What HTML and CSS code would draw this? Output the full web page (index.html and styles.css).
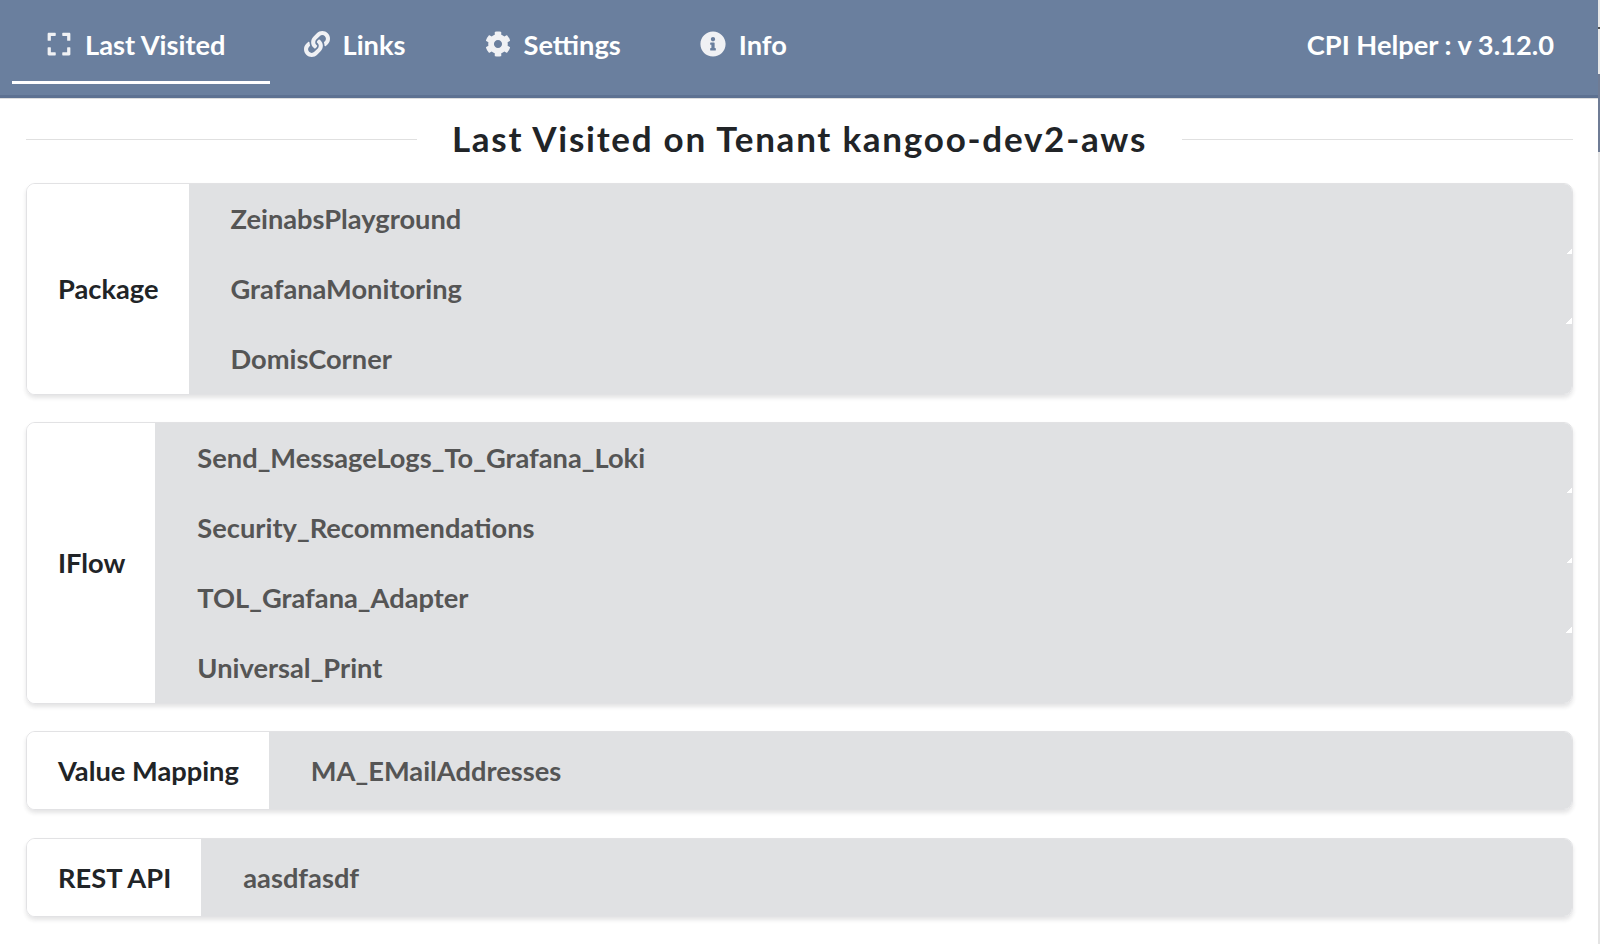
FILE: index.html
```html
<!DOCTYPE html>
<html lang="en">
<head>
    <meta charset="UTF-8">
    <title>CPI Helper</title>
    <link rel="stylesheet" href="styles.css">
</head>
<body>
    <div class="page">
        <nav class="menu">
            <a class="menu-item active" href="#">
                <svg class="icon" viewBox="0 0 448 512"><path fill="currentColor" d="M0 180V56c0-13.300 10.700-24 24-24h124c6.600 0 12 5.400 12 12v40c0 6.600-5.400 12-12 12H64v84c0 6.600-5.400 12-12 12H12c-6.600 0-12-5.400-12-12zM288 44v40c0 6.600 5.400 12 12 12h84v84c0 6.600 5.400 12 12 12h40c6.600 0 12-5.400 12-12V56c0-13.300-10.700-24-24-24H300c-6.600 0-12 5.400-12 12zm148 276h-40c-6.600 0-12 5.400-12 12v84h-84c-6.600 0-12 5.400-12 12v40c0 6.600 5.400 12 12 12h124c13.300 0 24-10.700 24-24V332c0-6.600-5.400-12-12-12zM160 468v-40c0-6.600-5.400-12-12-12H64v-84c0-6.600-5.400-12-12-12H12c-6.600 0-12 5.400-12 12v124c0 13.300 10.700 24 24 24h124c6.600 0 12-5.400 12-12z"/></svg>
                Last Visited
            </a>
            <a class="menu-item" href="#">
                <svg class="icon" viewBox="0 0 512 512"><path fill="currentColor" d="M326.612 185.391c59.747 59.809 58.927 155.698.36 214.59-.11.12-.24.25-.36.37l-67.2 67.2c-59.27 59.27-155.699 59.262-214.96 0-59.27-59.26-59.27-155.7 0-214.96l37.106-37.106c9.84-9.84 26.786-3.3 27.294 10.606.648 17.722 3.826 35.527 9.69 52.721 1.986 5.822.567 12.262-3.783 16.612l-13.087 13.087c-28.026 28.026-28.905 73.66-1.155 101.96 28.024 28.579 74.086 28.749 102.325.51l67.2-67.19c28.191-28.191 28.073-73.757 0-101.83-3.701-3.694-7.429-6.564-10.341-8.569a16.037 16.037 0 0 1-6.947-12.606c-.396-10.567 3.348-21.456 11.698-29.806l21.054-21.055c5.521-5.521 14.182-6.199 20.584-1.731a152.482 152.482 0 0 1 20.522 17.197zM467.547 44.449c-59.261-59.262-155.69-59.27-214.96 0l-67.2 67.2c-.12.12-.25.25-.36.37-58.566 58.892-59.387 154.781.36 214.59a152.454 152.454 0 0 0 20.521 17.196c6.402 4.468 15.064 3.789 20.584-1.731l21.054-21.055c8.35-8.35 12.094-19.239 11.698-29.806a16.037 16.037 0 0 0-6.947-12.606c-2.912-2.005-6.64-4.875-10.341-8.569-28.073-28.073-28.191-73.639 0-101.83l67.2-67.19c28.239-28.239 74.3-28.069 102.325.51 27.75 28.3 26.872 73.934-1.155 101.96l-13.087 13.087c-4.35 4.35-5.769 10.79-3.783 16.612 5.864 17.194 9.042 34.999 9.69 52.721.509 13.906 17.454 20.446 27.294 10.606l37.106-37.106c59.271-59.259 59.271-155.699.001-214.959z"/></svg>
                Links
            </a>
            <a class="menu-item" href="#">
                <svg class="icon" viewBox="0 0 512 512"><path fill="currentColor" d="M487.4 315.700l-42.600-24.600c4.300-23.200 4.300-47 0-70.200l42.600-24.600c4.900-2.800 7.100-8.600 5.500-14-11.100-35.600-30-67.800-54.700-94.600-3.800-4.100-10-5.100-14.800-2.300L380.800 110c-17.900-15.400-38.500-27.300-60.800-35.100V25.800c0-5.600-3.900-10.500-9.400-11.700-36.700-8.200-74.300-7.800-109.200 0-5.500 1.200-9.400 6.100-9.400 11.700V75c-22.200 7.900-42.800 19.800-60.800 35.100L88.700 85.500c-4.900-2.800-11-1.900-14.800 2.300-24.700 26.700-43.600 58.900-54.700 94.600-1.700 5.400.6 11.200 5.500 14L67.300 221c-4.300 23.200-4.300 47 0 70.200l-42.600 24.600c-4.900 2.800-7.100 8.600-5.500 14 11.100 35.600 30 67.800 54.700 94.600 3.800 4.100 10 5.100 14.800 2.300l42.600-24.600c17.900 15.400 38.500 27.300 60.800 35.100v49.200c0 5.600 3.900 10.500 9.400 11.700 36.700 8.200 74.300 7.800 109.200 0 5.500-1.200 9.400-6.100 9.400-11.700v-49.200c22.200-7.900 42.800-19.800 60.800-35.100l42.600 24.600c4.900 2.800 11 1.900 14.800-2.300 24.700-26.700 43.600-58.900 54.700-94.600 1.500-5.500-.7-11.300-5.600-14.100zM256 336c-44.100 0-80-35.900-80-80s35.900-80 80-80 80 35.900 80 80-35.900 80-80 80z"/></svg>
                Settings
            </a>
            <a class="menu-item" href="#">
                <svg class="icon" viewBox="0 0 512 512"><path fill="currentColor" d="M256 8C119.043 8 8 119.083 8 256c0 136.997 111.043 248 248 248s248-111.003 248-248C504 119.083 392.957 8 256 8zm0 110c23.196 0 42 18.804 42 42s-18.804 42-42 42-42-18.804-42-42 18.804-42 42-42zm56 254c0 6.627-5.373 12-12 12h-88c-6.627 0-12-5.373-12-12v-24c0-6.627 5.373-12 12-12h12v-64h-12c-6.627 0-12-5.373-12-12v-24c0-6.627 5.373-12 12-12h64c6.627 0 12 5.373 12 12v100h12c6.627 0 12 5.373 12 12v24z"/></svg>
                Info
            </a>
            <span class="version">CPI Helper : v 3.12.0</span>
        </nav>

        <main class="content">
            <h2 class="title">Last Visited on Tenant kangoo-dev2-aws</h2>

            <section class="group">
                <div class="group-label">Package</div>
                <div class="group-list">
                    <a class="group-item" href="#">ZeinabsPlayground</a>
                    <a class="group-item" href="#">GrafanaMonitoring</a>
                    <a class="group-item" href="#">DomisCorner</a>
                </div>
            </section>

            <section class="group">
                <div class="group-label">IFlow</div>
                <div class="group-list">
                    <a class="group-item" href="#">Send_MessageLogs_To_Grafana_Loki</a>
                    <a class="group-item" href="#">Security_Recommendations</a>
                    <a class="group-item" href="#">TOL_Grafana_Adapter</a>
                    <a class="group-item" href="#">Universal_Print</a>
                </div>
            </section>

            <section class="group single">
                <div class="group-label">Value Mapping</div>
                <div class="group-list">
                    <a class="group-item" href="#">MA_EMailAddresses</a>
                </div>
            </section>

            <section class="group single">
                <div class="group-label">REST API</div>
                <div class="group-list">
                    <a class="group-item" href="#">aasdfasdf</a>
                </div>
            </section>
        </main>
    </div>
    <div class="edge"></div>
</body>
</html>
```

FILE: styles.css
```css
* {
    box-sizing: border-box;
}

body {
    display: flex;
    min-height: 944px;
    margin: 0;
    background-color: #fff;
    color: #212427;
    font-family: Lato, "Open Sans", sans-serif;
    font-weight: 700;
    font-size: 27.25px;
}

a {
    color: inherit;
    text-decoration: none;
}

.page {
    flex: 1;
    min-width: 0;
}

/* strip of the next window at the right edge of the shot */
.edge {
    width: 2px;
    background: linear-gradient(#e8e8e8 27px, #555 27px, #555 29px, #e8e8e8 29px, #e8e8e8 74px, #6f7c95 74px, #6f7c95 152px, #e4e4e4 152px);
}

.menu {
    display: flex;
    align-items: flex-start;
    height: 98px;
    padding: 0 44px 0 12px;
    background-color: #6a7f9e;
    border-bottom: 3px solid #5d7191;
    box-shadow: 0 1px 0 #ddd;
    color: #fff;
}

.menu-item {
    display: flex;
    align-items: center;
    gap: 13px;
    height: 84px;
    padding: 7px 45px 0 34px;
    border-bottom: 3px solid transparent;
}

.menu-item.active {
    padding-right: 44px;
    border-bottom-color: #fff;
}

.icon {
    width: 26px;
    height: 26px;
    color: #f0f1f4;
}

.version {
    margin-left: auto;
    line-height: 90px;
}

.content {
    padding: 0 25px 0 26px;
}

.title {
    display: flex;
    align-items: center;
    gap: 35px;
    margin: 17px 0 22px;
    font-size: 35px;
    font-weight: 700;
    letter-spacing: 1.75px;
    line-height: 46px;
    white-space: nowrap;
}

.title::before,
.title::after {
    content: "";
    flex: 1;
    height: 1px;
    margin-top: 2px;
    background-color: #e0e0e0;
}

.group {
    display: flex;
    margin-bottom: 27px;
    border: 1px solid #e2e2e4;
    border-radius: 9px;
    overflow: hidden;
    box-shadow: 0 3px 4px rgba(34, 36, 38, 0.12);
}

.group-label {
    display: flex;
    align-items: center;
    padding: 0 30px 2px 31px;
    background-color: #fff;
}

.group-list {
    flex: 1;
    background-color: #e0e1e3;
    color: #555;
}

.group-item {
    position: relative;
    display: flex;
    align-items: center;
    height: 70px;
    padding: 0 0 2px 42px;
}

/* small white wedge where two items meet */
.group-item:not(:last-child)::after {
    content: "";
    position: absolute;
    right: 0;
    bottom: 0;
    width: 6px;
    height: 6px;
    background: linear-gradient(135deg, transparent 50%, #fff 50%);
}

.single {
    margin-bottom: 28px;
}

.single .group-label {
    padding-bottom: 0;
}

.single .group-item {
    height: 77px;
    padding-bottom: 0;
}
```
